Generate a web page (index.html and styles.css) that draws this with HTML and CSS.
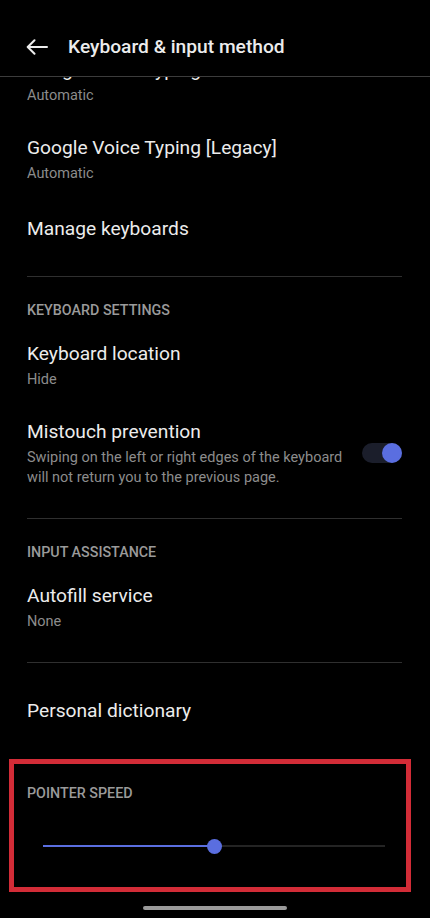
FILE: index.html
```html
<!DOCTYPE html>
<html lang="en">
<head>
<meta charset="utf-8">
<title>Keyboard &amp; input method</title>
<link rel="stylesheet" href="styles.css">
</head>
<body>
<div class="screen">
  <header class="appbar">
    <svg class="back" width="22" height="16" viewBox="0 0 22 16" aria-hidden="true">
      <path d="M21 8H2 M8.5 1.2 L1.7 8 L8.5 14.8" fill="none" stroke="#ececec" stroke-width="2" stroke-linecap="round" stroke-linejoin="round"/>
    </svg>
    <h1 class="appbar-title">Keyboard &amp; input method</h1>
  </header>

  <main class="scroll">
    <div class="list">
      <div class="item">
        <div class="item-title">Google Voice Typing</div>
        <div class="item-summary">Automatic</div>
      </div>
      <div class="item">
        <div class="item-title">Google Voice Typing [Legacy]</div>
        <div class="item-summary">Automatic</div>
      </div>
      <div class="item item-single">
        <div class="item-title">Manage keyboards</div>
      </div>

      <div class="divider divider-first"></div>
      <div class="category">KEYBOARD SETTINGS</div>

      <div class="item">
        <div class="item-title">Keyboard location</div>
        <div class="item-summary">Hide</div>
      </div>
      <div class="item item-switch">
        <div class="item-text">
          <div class="item-title">Mistouch prevention</div>
          <div class="item-summary">Swiping on the left or right edges of the keyboard will not return you to the previous page.</div>
        </div>
        <div class="switch"><span class="switch-thumb"></span></div>
      </div>

      <div class="divider"></div>
      <div class="category">INPUT ASSISTANCE</div>

      <div class="item">
        <div class="item-title">Autofill service</div>
        <div class="item-summary">None</div>
      </div>

      <div class="divider"></div>

      <div class="item item-dict">
        <div class="item-title">Personal dictionary</div>
      </div>

      <section class="pointer">
        <div class="category category-inbox">POINTER SPEED</div>
        <div class="slider">
          <div class="slider-track">
            <div class="slider-fill" style="width:50%"></div>
            <span class="slider-thumb" style="left:50%"></span>
          </div>
        </div>
      </section>

      <div class="home-wrap"><div class="home-bar"></div></div>
    </div>
  </main>
</div>
</body>
</html>
```

FILE: styles.css
```css
* { box-sizing: border-box; }

html, body {
  margin: 0;
  padding: 0;
  background: #000;
}

body {
  font-family: Roboto, "Noto Sans", "Liberation Sans", sans-serif;
  color: #ececec;
  width: 430px;
  height: 918px;
  overflow: hidden;
}

.screen {
  display: flex;
  flex-direction: column;
  height: 918px;
}

.appbar {
  flex: none;
  height: 77px;
  display: flex;
  align-items: center;
  padding: 17px 0 0 26px;
  border-bottom: 1px solid #3c3c3c;
  background: #000;
}

.back {
  flex: none;
  display: block;
}

.appbar-title {
  margin: 0 0 0 20px;
  font-size: 19.2px;
  font-weight: 500;
  color: #ececec;
  line-height: 24px;
}

.scroll {
  flex: 1;
  overflow: hidden;
}

.list {
  margin-top: -34px;
}

.item {
  padding: 15px 27px;
}

.item-single {
  padding: 18px 27px;
}

.item-dict {
  padding: 36px 27px 18px;
}

.item-title {
  font-size: 19.2px;
  line-height: 24px;
  color: #ececec;
  white-space: nowrap;
}

.item-summary {
  margin-top: 4px;
  font-size: 14.5px;
  line-height: 20px;
  color: #8c8c8c;
}

.item-switch {
  display: flex;
  align-items: center;
  gap: 8px;
  padding-right: 28px;
}

.item-text {
  flex: 1;
  min-width: 0;
}

.switch {
  flex: none;
  position: relative;
  width: 40px;
  height: 20px;
  border-radius: 10px;
  background: #1b1e2b;
  margin-top: -2px;
}

.switch-thumb {
  position: absolute;
  right: 0;
  top: 0;
  width: 20px;
  height: 20px;
  border-radius: 50%;
  background: #5a6ee0;
}

.divider {
  height: 1px;
  margin: 15px 28px 0 27px;
  background: #2f2f2f;
}

.divider-first {
  margin-top: 17px;
}

.category {
  padding: 24px 27px 8px;
  font-size: 14.3px;
  line-height: 18px;
  font-weight: 500;
  color: #9a9a9a;
}

.pointer {
  margin: 18px 19px 0 9px;
  border: 5px solid #d22c37;
  padding: 20px 0 31px 13px;
}

.category-inbox {
  padding: 0;
}

.slider {
  margin: 34px 21px 0 16px;
  height: 20px;
  display: flex;
  align-items: center;
}

.slider-track {
  position: relative;
  flex: 1;
  height: 2px;
  background: #242424;
}

.slider-fill {
  height: 2px;
  background: #5a6ee0;
}

.slider-thumb {
  position: absolute;
  top: 50%;
  width: 15px;
  height: 15px;
  margin: -7.5px 0 0 -7.5px;
  border-radius: 50%;
  background: #5a6ee0;
}

.home-wrap {
  display: flex;
  justify-content: center;
  padding-top: 14px;
}

.home-bar {
  width: 144px;
  height: 4px;
  border-radius: 2px;
  background: #9a9a9a;
}
```
